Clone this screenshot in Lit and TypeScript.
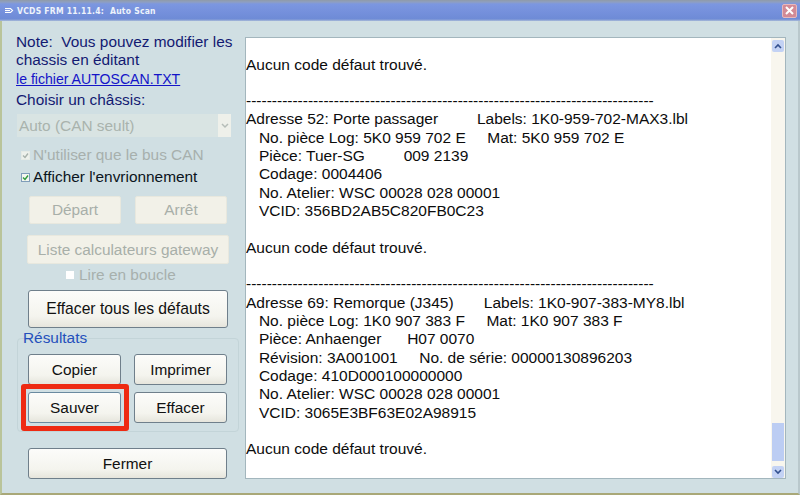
import { LitElement, html, css } from "lit";
import { customElement } from "lit/decorators.js";

const RULE = "-".repeat(79);
const LOG = `Aucun code défaut trouvé.

${RULE}
Adresse 52: Porte passager         Labels: 1K0-959-702-MAX3.lbl
   No. pièce Log: 5K0 959 702 E     Mat: 5K0 959 702 E
   Pièce: Tuer-SG         009 2139
   Codage: 0004406
   No. Atelier: WSC 00028 028 00001
   VCID: 356BD2AB5C820FB0C23

Aucun code défaut trouvé.

${RULE}
Adresse 69: Remorque (J345)       Labels: 1K0-907-383-MY8.lbl
   No. pièce Log: 1K0 907 383 F     Mat: 1K0 907 383 F
   Pièce: Anhaenger      H07 0070
   Révision: 3A001001     No. de série: 00000130896203
   Codage: 410D000100000000
   No. Atelier: WSC 00028 028 00001
   VCID: 3065E3BF63E02A98915

Aucun code défaut trouvé.`;

@customElement("app-root")
export class AppRoot extends LitElement {
  static styles = css`
    :host { display: block; width: 800px; height: 495px; overflow: hidden; font-family: "Liberation Sans", Arial, sans-serif; font-size: 15.4px; background: #d0dfe3; }
    .window { height: 495px; display: flex; flex-direction: column; box-sizing: border-box; border-left: 2px solid #b9c49a; border-right: 2px solid #b9c8cc; border-bottom: 2px solid #a9a878; }
    .title { height: 21px; flex: none; margin: 0 -2px; display: flex; align-items: center; padding: 0 3px 0 4px; gap: 3px; box-sizing: border-box; color: #eef3fb; font: bold 8.5px "DejaVu Sans Condensed", "DejaVu Sans", sans-serif; letter-spacing: 0.25px; white-space: pre;
      background: linear-gradient(#8f9aa8 0, #8f9fc0 2px, #7c97e0 4px, #7590dc 12px, #6e8bd6 19px, #a9bcd8 21px); }
    .title svg { flex: none; }
    .title span { flex: 1; }
    .close { width: 15px; height: 14px; flex: none; border-radius: 2px; background: #d28a96; border: 1px solid #e6b8bd; box-sizing: border-box; display: flex; align-items: center; justify-content: center; }
    .main { flex: 1; display: flex; min-height: 0; }
    .left { width: 243px; flex: none; box-sizing: border-box; padding: 12px 0 0 14px; position: relative; display: flex; flex-direction: column; white-space: nowrap; }
    .note { color: #131a72; line-height: 17.5px; margin: 0; width: 222px; white-space: pre-wrap; }
    a { display: block; color: #1414c8; font-size: 14.1px; line-height: 16px; margin-top: 3px; text-decoration: underline; }
    .label { color: #131a72; margin-top: 5px; line-height: 16px; }
    .select { margin: 6px 0 0 1px; width: 214px; height: 23px; box-sizing: border-box; background: #d9e4e3; color: #a9b3ad; padding-left: 2px; line-height: 23px; display: flex; justify-content: space-between; }
    .drop { width: 13px; background: #eef0ea; display: flex; align-items: center; justify-content: center; }
    .check { display: flex; align-items: center; gap: 3px; height: 16px; line-height: 16px; }
    .box { width: 9px; height: 9px; box-sizing: border-box; background: #f4f6f0; border: 1px solid #7f9db9; display: flex; align-items: center; justify-content: center; }
    .check.off { color: #a7b0ad; margin: 10px 0 0 5px; }
    .check.off .box { border-color: #e6ebe6; background: #eef1ec; }
    .check.on { color: #0b1420; margin: 6px 0 0 5px; }
    .row { display: flex; }
    .btn { box-sizing: border-box; display: flex; align-items: center; justify-content: center; color: #111; border: 1px solid #6f7f8b; border-radius: 3px; background: linear-gradient(#fcfcfa, #f4f4ee 70%, #e6e5dc); }
    .btn.dis { border: 1px solid #e8e8de; background: #f2f1e8; color: #a8afa9; border-radius: 2px; }
    .start { margin: 11px 0 0 13px; gap: 14px; }
    .start .btn { height: 28px; }
    .w1 { width: 92px; }
    .gw { width: 202px; height: 29px; margin: 11px 0 0 11px; }
    .loop { margin: 3px 0 0 50px; gap: 5px; height: 16px; line-height: 16px; color: #a7b0ad; display: flex; align-items: center; }
    .loop .box { border: 0; background: #fff; width: 8px; height: 8px; }
    .all { width: 200px; height: 38px; margin: 7px 0 0 12px; font-size: 15.7px; }
    .group { margin: 2px 0 0 1px; width: 222px; height: 103px; box-sizing: border-box; position: relative; padding: 0 0 0 11px; }
    .group .frame { position: absolute; inset: 8px 0 1px 0; border: 1px solid #c3d4d8; border-radius: 4px; }
    .legend { position: relative; color: #2450bc; line-height: 16px; margin-left: -5px; }
    .grid { position: relative; display: grid; grid-template-columns: 93px 93px; column-gap: 13px; row-gap: 7px; margin-top: 8px; }
    .grid .btn { height: 31px; }
    .grid .btn.save { border-color: #6a8aa0; }
    .mark { position: absolute; left: 19px; top: 363px; width: 108px; height: 47px; box-sizing: border-box; border: 5px solid #ee2a12; border-radius: 3px; pointer-events: none; }
    .close-main { width: 199px; height: 31px; margin: 15px 0 0 12px; }
    .logwrap { width: 541px; height: 442px; margin-top: 16px; flex: none; box-sizing: border-box; background: #fff; border: 1px solid #a3b6bd; display: flex; }
    pre { flex: 1; margin: 0; padding: 17.5px 0 0 0; font: 15.5px/18.33px "Liberation Sans", Arial, sans-serif; color: #0c0c0c; overflow: hidden; white-space: pre; }
    .scroll { width: 14px; flex: none; background: #f8f6ee; display: flex; flex-direction: column; justify-content: space-between; position: relative; padding: 2px 0 0 1px; box-sizing: border-box; }
    .arrow { width: 12px; height: 12px; background: #c3d2f4; display: flex; align-items: center; justify-content: center; border-radius: 2px; }
    .thumb { position: absolute; left: 1px; top: 385px; width: 12px; height: 38px; background: #bccdf3; }
  `;

  render() {
    return html`<div class="window">
      <div class="title">
        <svg width="10" height="9" viewBox="0 0 10 9" fill="none" stroke="#fff" stroke-width="1.2"><path d="M1 2.5h5.5l2 2-2 2H1"/><path d="M1 4.5h5"/></svg>
        <span>VCDS FRM 11.11.4:  Auto Scan</span>
        <div class="close"><svg width="9" height="9" viewBox="0 0 9 9" stroke="#fff" stroke-width="2"><path d="M1 1l7 7M8 1l-7 7"/></svg></div>
      </div>
      <div class="main">
        <div class="left">
          <p class="note">Note:  Vous pouvez modifier les chassis en éditant</p>
          <a>le fichier AUTOSCAN.TXT</a>
          <div class="label">Choisir un châssis:</div>
          <div class="select"><span>Auto (CAN seult)</span><span class="drop"><svg width="8" height="6" viewBox="0 0 8 6" fill="none" stroke="#b5bdb8" stroke-width="1.5"><path d="M1 1l3 3 3-3"/></svg></span></div>
          <div class="check off"><span class="box"><svg width="7" height="7" viewBox="0 0 7 7" fill="none" stroke="#a9b3ad" stroke-width="1.4"><path d="M1 3.5l2 2 3-4"/></svg></span>N'utiliser que le bus CAN</div>
          <div class="check on"><span class="box"><svg width="7" height="7" viewBox="0 0 7 7" fill="none" stroke="#2f9a3c" stroke-width="1.4"><path d="M1 3.5l2 2 3-4"/></svg></span>Afficher l'envrionnement</div>
          <div class="row start"><div class="btn dis w1">Départ</div><div class="btn dis w1">Arrêt</div></div>
          <div class="btn dis gw">Liste calculateurs gateway</div>
          <div class="loop"><span class="box"></span>Lire en boucle</div>
          <div class="btn all">Effacer tous les défauts</div>
          <div class="group">
            <div class="frame"></div>
            <div class="legend">Résultats</div>
            <div class="grid">
              <div class="btn">Copier</div><div class="btn">Imprimer</div>
              <div class="btn save">Sauver</div><div class="btn">Effacer</div>
            </div>
          </div>
          <div class="btn close-main">Fermer</div>
          <div class="mark"></div>
        </div>
        <div class="logwrap">
          <pre>${LOG}</pre>
          <div class="scroll">
            <div class="arrow"><svg width="8" height="6" viewBox="0 0 8 6" fill="none" stroke="#33508f" stroke-width="1.6"><path d="M1 5l3-3 3 3"/></svg></div>
            <div class="thumb"></div>
            <div class="arrow"><svg width="8" height="6" viewBox="0 0 8 6" fill="none" stroke="#33508f" stroke-width="1.6"><path d="M1 1l3 3 3-3"/></svg></div>
          </div>
        </div>
      </div>
    </div>`;
  }
}
